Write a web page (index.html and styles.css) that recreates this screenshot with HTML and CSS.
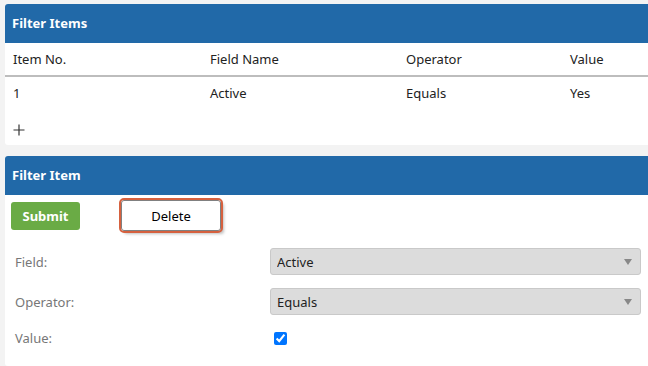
FILE: index.html
```html
<!DOCTYPE html>
<html lang="en">
<head>
    <meta charset="UTF-8" />
    <meta name="viewport" content="width=device-width, initial-scale=1" />
    <title>Filter Items</title>
    <link rel="stylesheet" href="styles.css">
</head>
<body>
    <div class="panel">
        <div class="panel-header">Filter Items</div>
        <table class="items">
            <thead>
                <tr>
                    <th class="col-no">Item No.</th>
                    <th class="col-field">Field Name</th>
                    <th class="col-op">Operator</th>
                    <th>Value</th>
                </tr>
            </thead>
            <tbody>
                <tr>
                    <td>1</td>
                    <td>Active</td>
                    <td>Equals</td>
                    <td>Yes</td>
                </tr>
            </tbody>
        </table>
        <div class="add-row">
            <svg width="12" height="12" viewBox="0 0 12 12"><path d="M6 0.5V11.5M0.5 6H11.5" stroke="#333" stroke-width="1.2" fill="none"/></svg>
        </div>
    </div>

    <div class="panel panel-item">
        <div class="panel-header">Filter Item</div>
        <div class="buttons">
            <button class="btn-submit">Submit</button>
            <button class="btn-delete">Delete</button>
        </div>
        <div class="form">
            <div class="form-row">
                <label>Field:</label>
                <div class="select-wrap">
                    <select disabled>
                        <option>Active</option>
                    </select>
                </div>
            </div>
            <div class="form-row">
                <label>Operator:</label>
                <div class="select-wrap">
                    <select disabled>
                        <option>Equals</option>
                    </select>
                </div>
            </div>
            <div class="form-row row-value">
                <label>Value:</label>
                <input type="checkbox" checked />
            </div>
        </div>
    </div>
</body>
</html>
```

FILE: styles.css
```css
html {
    overflow: hidden;
}

body {
    margin: 0;
    padding: 4px 0 0 5px;
    background-color: #f3f3f3;
    font-family: "Noto Sans", "Open Sans", sans-serif;
    font-size: 13px;
    color: #222;
}

.panel {
    width: 660px;
    background-color: #fff;
    height: 141px;
    border-radius: 3px 0 0 3px;
    overflow: hidden;
}

.panel-item {
    margin-top: 11px;
    height: 210px;
}

.panel-header {
    height: 39px;
    line-height: 39px;
    padding-left: 7px;
    background-color: #2169a8;
    color: #fff;
    font-weight: bold;
    font-size: 13px;
}

.items {
    border-collapse: collapse;
    width: 100%;
}

.items th, .items td {
    text-align: left;
    padding: 0 0 0 8px;
    font-weight: normal;
}

.items th {
    height: 32px;
    border-bottom: 2px solid #bdbdbd;
}

.items td {
    height: 31px;
}

.col-no {
    width: 189px;
}

.col-field {
    width: 188px;
}

.col-op {
    width: 156px;
}

.add-row {
    padding: 14px 0 0 8px;
    height: 14px;
}

.buttons {
    display: flex;
    align-items: center;
    padding: 4px 6px 0;
    height: 33px;
}

.buttons button {
    font-family: inherit;
    font-size: 13px;
    border-radius: 3px;
    cursor: pointer;
}

.btn-submit {
    width: 69px;
    height: 28px;
    background-color: #6aab45;
    color: #fff;
    font-weight: bold;
    border: none;
}

.btn-delete {
    margin-left: 41px;
    width: 100px;
    height: 31px;
    background-color: #fff;
    color: #000;
    border: 1px solid #808080;
    outline: 2px solid #d6613f;
    box-shadow: 3px 3px 3px rgba(0, 0, 0, 0.25);
}

.form {
    padding: 16px 0 0 10px;
}

.form-row {
    display: flex;
    align-items: center;
    height: 27px;
    margin-bottom: 13px;
}

.form-row label {
    width: 255px;
    color: #777;
}

.row-value {
    height: 20px;
}

.row-value input {
    margin: 0 0 0 4px;
    width: 13px;
    height: 13px;
}

.select-wrap {
    position: relative;
    width: 371px;
}

.select-wrap select {
    appearance: none;
    width: 100%;
    height: 27px;
    padding: 0 6px;
    background-color: #dcdcdc;
    border: 1px solid #c9c9c9;
    border-radius: 3px;
    font-family: inherit;
    font-size: 13px;
    color: #222;
    opacity: 1;
}

.select-wrap::after {
    content: "";
    position: absolute;
    right: 9px;
    top: 11px;
    border-left: 4px solid transparent;
    border-right: 4px solid transparent;
    border-top: 6px solid #888;
}
```
